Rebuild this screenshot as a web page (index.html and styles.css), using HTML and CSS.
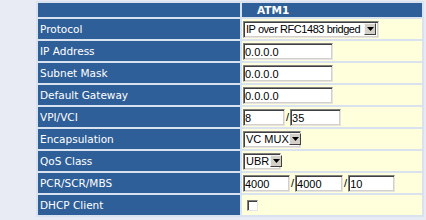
FILE: index.html
```html
<!DOCTYPE html>
<html lang="en">
<head>
    <meta charset="UTF-8">
    <title>ATM1</title>
    <link rel="stylesheet" href="styles.css">
</head>
<body>
<table class="wan">
    <tr class="head">
        <td class="label"></td>
        <td class="title">ATM1</td>
    </tr>
    <tr>
        <td class="label">Protocol</td>
        <td class="field">
            <span class="sel w136">
                <select class="tight"><option>IP over RFC1483 bridged</option></select>
                <span class="arrow"><svg width="7" height="4" viewBox="0 0 7 4"><path d="M0 0h7L3.5 4z" fill="#000"/></svg></span>
            </span>
        </td>
    </tr>
    <tr>
        <td class="label">IP Address</td>
        <td class="field"><input class="txt w90" value="0.0.0.0"></td>
    </tr>
    <tr>
        <td class="label">Subnet Mask</td>
        <td class="field"><input class="txt w90" value="0.0.0.0"></td>
    </tr>
    <tr>
        <td class="label">Default Gateway</td>
        <td class="field"><input class="txt w90" value="0.0.0.0"></td>
    </tr>
    <tr>
        <td class="label">VPI/VCI</td>
        <td class="field"><input class="txt w42" value="8"><span class="slash">/</span><input class="txt w51" value="35"></td>
    </tr>
    <tr>
        <td class="label">Encapsulation</td>
        <td class="field">
            <span class="sel w58">
                <select><option>VC MUX</option></select>
                <span class="arrow"><svg width="7" height="4" viewBox="0 0 7 4"><path d="M0 0h7L3.5 4z" fill="#000"/></svg></span>
            </span>
        </td>
    </tr>
    <tr>
        <td class="label">QoS Class</td>
        <td class="field">
            <span class="sel w38">
                <select><option>UBR</option></select>
                <span class="arrow"><svg width="7" height="4" viewBox="0 0 7 4"><path d="M0 0h7L3.5 4z" fill="#000"/></svg></span>
            </span>
        </td>
    </tr>
    <tr>
        <td class="label">PCR/SCR/MBS</td>
        <td class="field"><input class="txt w47" value="4000"><span class="slash">/</span><input class="txt w48" value="4000"><span class="slash">/</span><input class="txt w47" value="10"></td>
    </tr>
    <tr>
        <td class="label">DHCP Client</td>
        <td class="field"><input type="checkbox" class="chk"></td>
    </tr>
</table>
</body>
</html>
```

FILE: styles.css
```css
*{
    margin: 0;
    padding: 0;
}
body{
    background-color: #e9ebf4;
    font-family: "DejaVu Sans", Verdana, sans-serif;
    font-size: 10.5px;
}
.wan{
    margin: 1px 0 0 36px;
    width: 388px;
    border-spacing: 2px;
    background-color: #d9e3ef;
}
.wan td{
    height: 20px;
    line-height: 12px;
    vertical-align: middle;
}
.wan .head td{
    height: 14px;
    background-color: #2f5f98;
}
.wan .title{
    color: #fff;
    font-weight: bold;
    padding-left: 15px;
}
.wan .label{
    width: 200px;
    padding-left: 2px;
    background-color: #2f5f98;
    color: #fff;
}
.wan .field{
    padding-left: 1px;
    background-color: #ffffdc;
    font-size: 0;
}
.txt{
    height: 17px;
    box-sizing: border-box;
    border: 1px solid;
    border-color: #808080 #e4e4e4 #e4e4e4 #808080;
    box-shadow: inset 1px 1px 0 #404040, inset -1px -1px 0 #d4d0c8;
    padding: 1px 1px 0 1px;
    font-family: "Liberation Sans", Arial, sans-serif;
    font-size: 11px;
    color: #000;
    background: #fff;
    outline: none;
    vertical-align: middle;
}
.w90{ width: 90px; }
.w42{ width: 42px; }
.w51{ width: 51px; }
.w47{ width: 47px; }
.w48{ width: 48px; }
.slash{
    display: inline-block;
    font-family: "Liberation Sans", Arial, sans-serif;
    font-size: 11px;
    color: #000;
    margin: 0 1px;
    vertical-align: middle;
}
.sel{
    display: inline-flex;
    align-items: center;
    justify-content: space-between;
    height: 17px;
    box-sizing: border-box;
    border: 1px solid;
    border-color: #808080 #e4e4e4 #e4e4e4 #808080;
    box-shadow: inset 1px 1px 0 #404040, inset -1px -1px 0 #d4d0c8;
    background: #fff;
    padding: 0 2px 0 2px;
    vertical-align: middle;
}
.sel select{
    appearance: none;
    -webkit-appearance: none;
    border: none;
    padding: 0;
    background: transparent;
    font-family: "Liberation Sans", Arial, sans-serif;
    font-size: 11px;
    color: #000;
    outline: none;
}
.sel select.tight{
    letter-spacing: -0.45px;
}
.sel .arrow{
    flex: none;
    width: 12px;
    height: 12px;
    box-sizing: border-box;
    display: flex;
    align-items: center;
    justify-content: center;
    background: #d4d0c8;
    border: 1px solid;
    border-color: #f4f4f4 #404040 #404040 #f4f4f4;
}
.w136{ width: 136px; }
.w58{ width: 58px; }
.w38{ width: 38px; }
.chk{
    appearance: none;
    -webkit-appearance: none;
    width: 11px;
    height: 11px;
    margin-left: 4px;
    box-sizing: border-box;
    border: 1px solid;
    border-color: #808080 #e4e4e4 #e4e4e4 #808080;
    box-shadow: inset 1px 1px 0 #404040;
    background: #fff;
    vertical-align: middle;
}
```
